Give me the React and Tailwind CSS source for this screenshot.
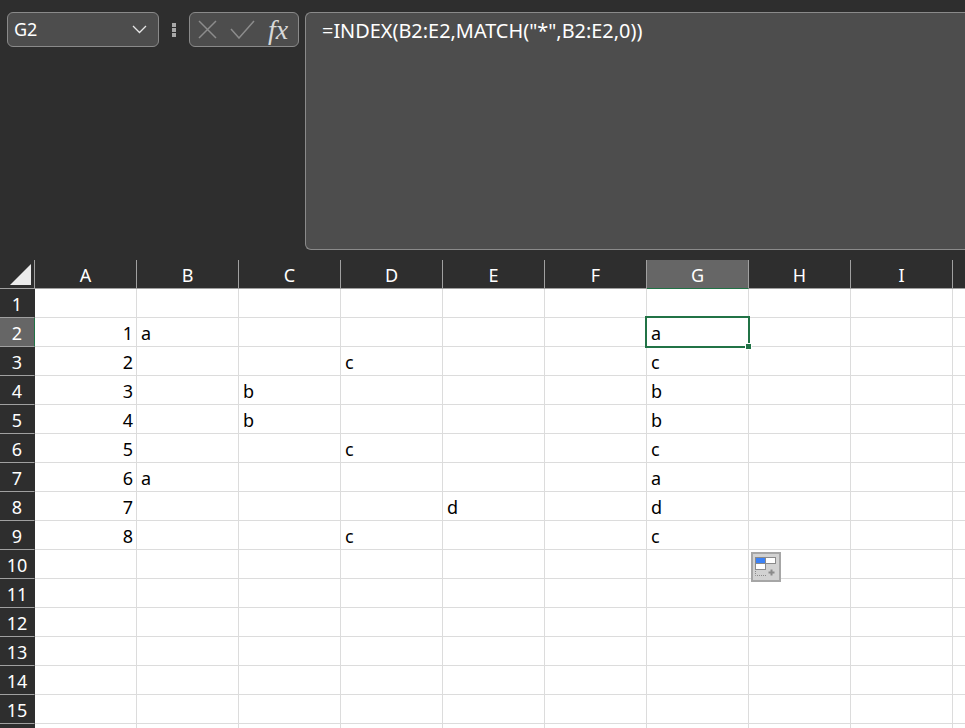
import React from 'react';

const columns = ['A', 'B', 'C', 'D', 'E', 'F', 'G', 'H', 'I', ''];

// cell values by row number, only the filled ones
const rows = {
  2: { A: '1', B: 'a', G: 'a' },
  3: { A: '2', D: 'c', G: 'c' },
  4: { A: '3', C: 'b', G: 'b' },
  5: { A: '4', C: 'b', G: 'b' },
  6: { A: '5', D: 'c', G: 'c' },
  7: { A: '6', B: 'a', G: 'a' },
  8: { A: '7', E: 'd', G: 'd' },
  9: { A: '8', D: 'c', G: 'c' },
};

const rowNumbers = [1, 2, 3, 4, 5, 6, 7, 8, 9, 10, 11, 12, 13, 14, 15, ''];

function FormulaBar() {
  return (
    <div className="flex h-[260px] shrink-0 items-start bg-[#2e2e2e] pt-3 pl-[7px]">
      {/* Name box */}
      <div className="flex h-[35px] w-[152px] shrink-0 items-center justify-between rounded-[6px] border border-[#8a8a8a] bg-[#4d4d4d] pr-[11px] pl-[6px] text-[18px] text-white">
        <span>G2</span>
        <svg width="15" height="9" viewBox="0 0 15 9" fill="none" stroke="#e6e6e6" strokeWidth="1.3">
          <path d="M1 1l6.5 6.5L14 1" />
        </svg>
      </div>

      {/* Grip */}
      <div className="flex h-[35px] w-[30px] shrink-0 flex-col items-center justify-center gap-[1px]">
        <div className="size-[4px] bg-[#a8a8a8]" />
        <div className="size-[4px] bg-[#a8a8a8]" />
        <div className="size-[4px] bg-[#a8a8a8]" />
      </div>

      {/* Cancel, enter, function */}
      <div className="flex h-[35px] w-[110px] shrink-0 items-center rounded-[6px] border border-[#8a8a8a] bg-[#4d4d4d]">
        <svg className="ml-[8px]" width="19" height="19" viewBox="0 0 19 19" fill="none" stroke="#8c8c8c" strokeWidth="1.5">
          <path d="M1 1l17 17M18 1L1 18" />
        </svg>
        <svg className="ml-[13px]" width="25" height="19" viewBox="0 0 25 19" fill="none" stroke="#8c8c8c" strokeWidth="1.5">
          <path d="M1 9l8 9L24 1" />
        </svg>
        <span className="ml-[13px] font-['Liberation_Serif',serif] text-[28px] leading-none font-normal text-[#d8d8d8] italic">
          fx
        </span>
      </div>

      {/* Formula input */}
      <div className="ml-[6px] h-[238px] grow rounded-l-[6px] border border-r-0 border-[#8a8a8a] bg-[#4d4d4d] pt-[5px] pl-[16px] text-[19.9px] leading-[26px] text-white">
        =INDEX(B2:E2,MATCH("*",B2:E2,0))
      </div>
    </div>
  );
}

function ColumnHeaders() {
  return (
    <div className="flex h-[29px] shrink-0 border-b border-[#a0a0a0] bg-[#2e2e2e]">
      <div className="flex h-[28px] w-[35px] shrink-0 items-end justify-end border-r border-[#a0a0a0] pr-[3px] pb-[3px]">
        <svg width="21" height="21" viewBox="0 0 21 21">
          <path d="M21 0v21H0z" fill="#ececec" />
        </svg>
      </div>
      {columns.map((col) => (
        <div
          key={col}
          className={
            col === 'G'
              ? 'flex h-[29px] w-[102px] shrink-0 items-center justify-center border-r border-b border-r-[#a0a0a0] border-b-[#217346] bg-[#666666] pt-[3px] text-[18px] text-white'
              : 'flex h-[28px] w-[102px] shrink-0 items-center justify-center border-r border-[#a0a0a0] pt-[3px] text-[18px] text-white'
          }
        >
          {col}
        </div>
      ))}
    </div>
  );
}

function PasteOptions() {
  return (
    <div className="absolute top-[2px] left-[2px] z-20 flex size-[30px] items-center justify-center border-2 border-[#a6a6a6] bg-[#d2d2d2]">
      <svg width="26" height="26" viewBox="0 0 26 26">
        <rect x="2.5" y="3.5" width="10" height="6" fill="#3c82f6" stroke="#8a8a8a" />
        <rect x="12.5" y="3.5" width="10" height="6" fill="#ffffff" stroke="#8a8a8a" />
        <rect x="2.5" y="9.5" width="10" height="6" fill="#ffffff" stroke="#8a8a8a" />
        <path d="M2.5 17v4.5H13" fill="none" stroke="#8a8a8a" strokeDasharray="1 1" />
        <path d="M15.5 18.5h6M18.5 15.5v6" stroke="#8a8a8a" strokeWidth="2" />
      </svg>
    </div>
  );
}

function SheetRow({ number }) {
  const values = rows[number] || {};
  const active = number === 2;
  return (
    <div className="flex h-[29px] shrink-0">
      <div
        className={
          active
            ? 'flex w-[35px] shrink-0 items-center justify-center border-r border-b border-r-[#217346] border-b-[#a0a0a0] bg-[#666666] pt-[2px] text-[18px] text-white'
            : 'flex w-[35px] shrink-0 items-center justify-center border-r border-b border-r-[#2e2e2e] border-b-[#a0a0a0] bg-[#2e2e2e] pt-[2px] text-[18px] text-white'
        }
      >
        {number}
      </div>
      {columns.map((col) => (
        <div
          key={col}
          className={
            col === 'A'
              ? 'relative flex w-[102px] shrink-0 items-center justify-end border-r border-b border-[#dcdcdc] pt-[2px] pr-[3px] text-[18px] text-black'
              : 'relative flex w-[102px] shrink-0 items-center border-r border-b border-[#dcdcdc] pt-[2px] pl-[4px] text-[18px] text-black'
          }
        >
          {values[col]}
          {active && col === 'G' && (
            <div className="absolute top-[-2px] left-[-2px] z-10 h-[32px] w-[105px] border-2 border-[#217346]">
              <div className="absolute right-[-4px] bottom-[-4px] size-[7px] border border-white bg-[#217346]" />
            </div>
          )}
          {number === 10 && col === 'H' && <PasteOptions />}
        </div>
      ))}
    </div>
  );
}

export default function App() {
  return (
    <div className="flex h-screen flex-col overflow-hidden bg-white font-['Noto_Sans',sans-serif]">
      <FormulaBar />
      <ColumnHeaders />
      {rowNumbers.map((number) => (
        <SheetRow key={number} number={number} />
      ))}
    </div>
  );
}
